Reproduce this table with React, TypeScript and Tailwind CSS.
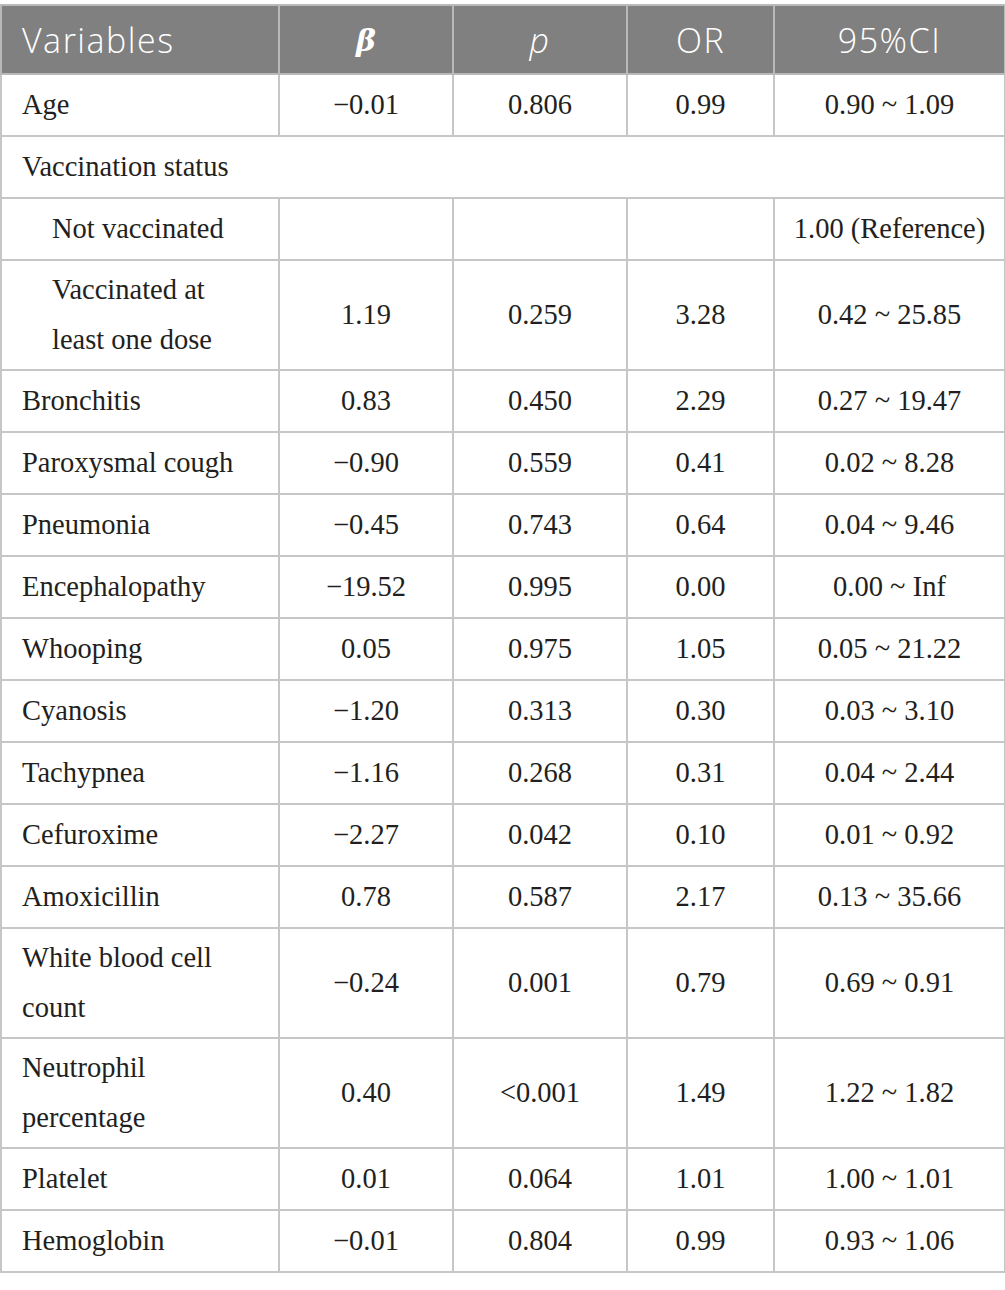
import React from "react";

type Row = { v: string; b?: string; p?: string; or?: string; ci?: string; indent?: boolean; span?: boolean; double?: boolean };

const rows: Row[] = [
  { v: "Age", b: "−0.01", p: "0.806", or: "0.99", ci: "0.90 ~ 1.09" },
  { v: "Vaccination status", span: true },
  { v: "Not vaccinated", indent: true, b: "", p: "", or: "", ci: "1.00 (Reference)" },
  { v: "Vaccinated at\nleast one dose", indent: true, double: true, b: "1.19", p: "0.259", or: "3.28", ci: "0.42 ~ 25.85" },
  { v: "Bronchitis", b: "0.83", p: "0.450", or: "2.29", ci: "0.27 ~ 19.47" },
  { v: "Paroxysmal cough", b: "−0.90", p: "0.559", or: "0.41", ci: "0.02 ~ 8.28" },
  { v: "Pneumonia", b: "−0.45", p: "0.743", or: "0.64", ci: "0.04 ~ 9.46" },
  { v: "Encephalopathy", b: "−19.52", p: "0.995", or: "0.00", ci: "0.00 ~ Inf" },
  { v: "Whooping", b: "0.05", p: "0.975", or: "1.05", ci: "0.05 ~ 21.22" },
  { v: "Cyanosis", b: "−1.20", p: "0.313", or: "0.30", ci: "0.03 ~ 3.10" },
  { v: "Tachypnea", b: "−1.16", p: "0.268", or: "0.31", ci: "0.04 ~ 2.44" },
  { v: "Cefuroxime", b: "−2.27", p: "0.042", or: "0.10", ci: "0.01 ~ 0.92" },
  { v: "Amoxicillin", b: "0.78", p: "0.587", or: "2.17", ci: "0.13 ~ 35.66" },
  { v: "White blood cell\ncount", double: true, b: "−0.24", p: "0.001", or: "0.79", ci: "0.69 ~ 0.91" },
  { v: "Neutrophil\npercentage", double: true, b: "0.40", p: "<0.001", or: "1.49", ci: "1.22 ~ 1.82" },
  { v: "Platelet", b: "0.01", p: "0.064", or: "1.01", ci: "1.00 ~ 1.01" },
  { v: "Hemoglobin", b: "−0.01", p: "0.804", or: "0.99", ci: "0.93 ~ 1.06" },
];

const td = "border-2 border-[#c6c6c6] text-center align-middle px-0";

export default function App() {
  return (
    <div className="w-[1005px] h-[1290px] bg-white pt-[4px]">
      <table
        className="border-collapse w-[1004px] table-fixed text-[#231f20] text-[28.5px] leading-[50px]"
        style={{ fontFamily: '"Liberation Serif", "Times New Roman", serif' }}
      >
        <colgroup>
          <col className="w-[278px]" />
          <col className="w-[174px]" />
          <col className="w-[174px]" />
          <col className="w-[147px]" />
          <col className="w-[231px]" />
        </colgroup>
        <thead>
          <tr className="h-[69px] bg-[#808080] text-white text-[34px] tracking-[1.5px]" style={{ fontFamily: '"Open Sans", Lato, sans-serif' }}>
            <th className="border-2 border-[#b9b9b9] text-left pl-[20px] font-light">Variables</th>
            <th className="border-2 border-[#b9b9b9] text-center font-light">
              <span className="italic font-bold tracking-normal" style={{ fontFamily: '"DejaVu Serif", serif', fontSize: "30px" }}>β</span>
            </th>
            <th className="border-2 border-[#b9b9b9] text-center font-light italic">p</th>
            <th className="border-2 border-[#b9b9b9] text-center font-light">OR</th>
            <th className="border-2 border-[#b9b9b9] text-center font-light">95%CI</th>
          </tr>
        </thead>
        <tbody>
          {rows.map((r, i) =>
            r.span ? (
              <tr key={i} className="h-[62px]">
                <td colSpan={5} className="border-2 border-[#c6c6c6] text-left pl-[20px] align-middle">{r.v}</td>
              </tr>
            ) : (
              <tr key={i} className={r.double ? "h-[110px]" : "h-[62px]"}>
                <td className={`border-2 border-[#c6c6c6] text-left align-middle whitespace-pre-line ${r.indent ? "pl-[50px]" : "pl-[20px]"}`}>{r.v}</td>
                <td className={td}>{r.b}</td>
                <td className={td}>{r.p}</td>
                <td className={td}>{r.or}</td>
                <td className={td}>{r.ci}</td>
              </tr>
            )
          )}
        </tbody>
      </table>
    </div>
  );
}
